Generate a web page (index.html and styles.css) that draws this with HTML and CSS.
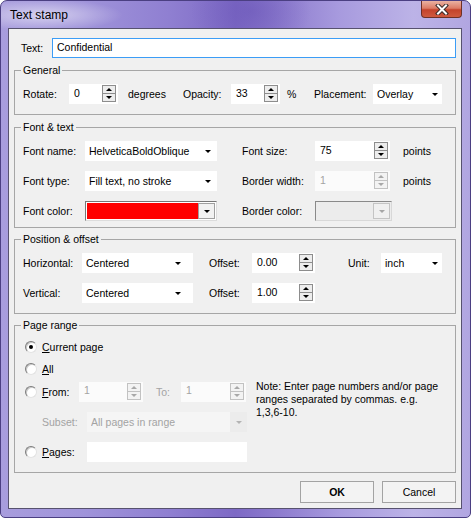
FILE: index.html
```html
<!DOCTYPE html>
<html>
<head>
<meta charset="utf-8">
<title>Text stamp</title>
<link rel="stylesheet" href="styles.css">
</head>
<body>
<div class="window">
  <div class="titlebar">
    <span class="title">Text stamp</span>
    <span class="close">
      <svg width="14" height="11" viewBox="0 0 14 11"><path d="M3 1.5 L11 9.5 M11 1.5 L3 9.5" stroke="#3a2a28" stroke-width="4" stroke-linecap="square"/><path d="M3 1.5 L11 9.5 M11 1.5 L3 9.5" stroke="#ffffff" stroke-width="2" stroke-linecap="square"/></svg>
    </span>
  </div>
  <div class="client">
    <div class="text-row">
      <span class="lbl lbl-text">Text:</span>
      <div class="textbox">Confidential</div>
    </div>

    <fieldset class="group g-general">
      <legend>General</legend>
      <div class="row">
        <span class="lbl w46">Rotate:</span>
        <div class="spin w49"><span class="val">0</span><span class="spinbtn"><span class="up"></span><span class="down"></span></span></div>
        <span class="lbl w55 ml10">degrees</span>
        <span class="lbl w48">Opacity:</span>
        <div class="spin w49"><span class="val">33</span><span class="spinbtn"><span class="up"></span><span class="down"></span></span></div>
        <span class="lbl w27 ml7">%</span>
        <span class="lbl w59">Placement:</span>
        <div class="dropdown w69 pr4"><span class="val">Overlay</span><span class="arrow"></span></div>
      </div>
    </fieldset>

    <fieldset class="group g-font">
      <legend>Font &amp; text</legend>
      <div class="rows gap10">
        <div class="row">
          <span class="lbl w62">Font name:</span>
          <div class="dropdown w132"><span class="val">HelveticaBoldOblique</span><span class="arrow"></span></div>
          <span class="lbl w73 ml25">Font size:</span>
          <div class="spin w75"><span class="val">75</span><span class="spinbtn"><span class="up"></span><span class="down"></span></span></div>
          <span class="lbl ml13">points</span>
        </div>
        <div class="row">
          <span class="lbl w62">Font type:</span>
          <div class="dropdown w132"><span class="val">Fill text, no stroke</span><span class="arrow"></span></div>
          <span class="lbl w73 ml25">Border width:</span>
          <div class="spin w75 disabled"><span class="val">1</span><span class="spinbtn"><span class="up"></span><span class="down"></span></span></div>
          <span class="lbl ml13">points</span>
        </div>
        <div class="row">
          <span class="lbl w62">Font color:</span>
          <div class="colorpick w132"><span class="swatch"></span><span class="cbtn"><span class="arrow"></span></span></div>
          <span class="lbl w73 ml25">Border color:</span>
          <div class="colorpick w77 disabled"><span class="swatch"></span><span class="cbtn"><span class="arrow"></span></span></div>
        </div>
      </div>
    </fieldset>

    <fieldset class="group g-pos">
      <legend>Position &amp; offset</legend>
      <div class="rows gap10">
        <div class="row">
          <span class="lbl w59">Horizontal:</span>
          <div class="dropdown w111 pr12"><span class="val">Centered</span><span class="arrow"></span></div>
          <span class="lbl w43 ml16">Offset:</span>
          <div class="spin w63"><span class="val">0.00</span><span class="spinbtn"><span class="up"></span><span class="down"></span></span></div>
          <span class="lbl w33 ml33">Unit:</span>
          <div class="dropdown w61 pr4"><span class="val">inch</span><span class="arrow"></span></div>
        </div>
        <div class="row">
          <span class="lbl w59">Vertical:</span>
          <div class="dropdown w111 pr12"><span class="val">Centered</span><span class="arrow"></span></div>
          <span class="lbl w43 ml16">Offset:</span>
          <div class="spin w63"><span class="val">1.00</span><span class="spinbtn"><span class="up"></span><span class="down"></span></span></div>
        </div>
      </div>
    </fieldset>

    <fieldset class="group g-page">
      <legend>Page range</legend>
      <div class="prow h18">
        <span class="radio checked"></span>
        <span class="lbl"><u>C</u>urrent page</span>
      </div>
      <div class="prow h18 mt4">
        <span class="radio"></span>
        <span class="lbl"><u>A</u>ll</span>
      </div>
      <div class="pr-mid">
        <div class="pr-left">
          <div class="prow h21">
            <span class="radio"></span>
            <span class="lbl w37"><u>F</u>rom:</span>
            <div class="spin w64 disabled"><span class="val">1</span><span class="spinbtn"><span class="up"></span><span class="down"></span></span></div>
            <span class="lbl w25 ml13 dis">To:</span>
            <div class="spin w65 disabled"><span class="val">1</span><span class="spinbtn"><span class="up"></span><span class="down"></span></span></div>
          </div>
          <div class="prow h20">
            <span class="lbl w45 ml19 dis">Subset:</span>
            <div class="dropdown w160 disabled-dd"><span class="val">All pages in range</span><span class="ddbtn"><span class="arrow"></span></span></div>
          </div>
        </div>
        <div class="note">Note: Enter page numbers and/or page<br>ranges separated by commas. e.g.<br>1,3,6-10.</div>
      </div>
      <div class="prow h20 mt10">
        <span class="radio"></span>
        <span class="lbl w45"><u>P</u>ages:</span>
        <div class="input w160"></div>
      </div>
    </fieldset>

    <div class="buttons">
      <button class="btn btn-ok">OK</button>
      <button class="btn">Cancel</button>
    </div>
  </div>
</div>
</body>
</html>
```

FILE: styles.css
```css
* { box-sizing: border-box; }

body {
  margin: 0;
  background: #ffffff;
  font-family: "Liberation Sans", Arial, sans-serif;
  font-size: 10.5px;
  color: #000;
}

.window {
  width: 471px;
  height: 518px;
  border: 1px solid #4b3f82;
  border-radius: 7px 7px 5px 5px;
  padding: 0 8px 8px 7px;
  display: flex;
  flex-direction: column;
  background:
    radial-gradient(ellipse 80px 16px at 42px 14px, rgba(255,255,255,0.55), rgba(255,255,255,0) 100%),
    radial-gradient(ellipse 60px 40px at 250px 10px, rgba(100,80,180,0.45), rgba(100,80,180,0) 100%),
    linear-gradient(90deg, #a89ddd 0%, #9f93da 18%, #8f7fd1 36%, #7d69c5 50%, #8b79cd 58%, #a79ade 72%, #bcb3e7 88%, #b1a6e1 100%);
}

.titlebar {
  height: 27px;
  display: flex;
  justify-content: space-between;
  align-items: flex-start;
}

.title {
  font-size: 12px;
  padding: 7px 0 0 2px;
  color: #000;
}

.close {
  width: 41px;
  height: 17px;
  border: 1px solid #6e3026;
  border-top: none;
  border-radius: 0 0 4px 4px;
  background: linear-gradient(#eab2a2 0%, #dc7c66 45%, #c4432c 55%, #cf5a3f 100%);
  display: flex;
  align-items: center;
  justify-content: center;
}

.client {
  flex: 1;
  border: 1px solid #57526f;
  background: #f0f0f0;
  padding: 9px 5px 0 5px;
  display: flex;
  flex-direction: column;
}

.text-row {
  display: flex;
  align-items: center;
  height: 20px;
  padding-left: 7px;
}

.lbl { white-space: nowrap; flex: none; }
.lbl-text { width: 31px; }

.textbox {
  flex: 1;
  height: 20px;
  border: 1px solid #3c9df6;
  background: #fff;
  padding: 0 4px;
  line-height: 17px;
}

fieldset.group {
  margin: 6px 0 0;
  border: 1px solid #a6a6a6;
  padding: 0 8px;
  min-width: 0;
}

fieldset.group legend {
  padding: 0 2px;
  margin-left: -2px;
  line-height: 12px;
}

.g-general { padding-top: 8px !important; padding-bottom: 10px !important; }
.g-font { padding-top: 8px !important; padding-bottom: 6px !important; }
.g-pos { margin-top: 5px !important; padding-top: 8px !important; padding-bottom: 10px !important; }
.g-page { margin-top: 5px !important; padding-top: 7px !important; padding-bottom: 10px !important; }

.rows { display: flex; flex-direction: column; }
.gap10 { gap: 10px; }

.row {
  display: flex;
  align-items: center;
  height: 20px;
}

/* widths */
.w25 { width: 25px; } .w27 { width: 27px; } .w33 { width: 33px; } .w37 { width: 37px; }
.w43 { width: 43px; } .w45 { width: 45px; } .w46 { width: 46px; } .w48 { width: 48px; }
.w49 { width: 49px; } .w55 { width: 55px; } .w59 { width: 59px; } .w61 { width: 61px; }
.w62 { width: 62px; } .w63 { width: 63px; } .w64 { width: 64px; } .w65 { width: 65px; }
.w69 { width: 69px; } .w73 { width: 73px; } .w75 { width: 75px; } .w77 { width: 77px; }
.w111 { width: 111px; } .w132 { width: 132px; } .w160 { width: 160px; }

.ml7 { margin-left: 7px; } .ml10 { margin-left: 10px; } .ml13 { margin-left: 13px; }
.ml16 { margin-left: 16px; } .ml19 { margin-left: 19px; } .ml25 { margin-left: 25px; }
.ml33 { margin-left: 33px; }
.mt4 { margin-top: 4px; } .mt10 { margin-top: 10px; }

/* spin box */
.spin {
  flex: none;
  display: flex;
  align-items: center;
  height: 20px;
  background: #fff;
  padding: 0 2px 0 5px;
}
.spin .val { flex: 1; padding-bottom: 3px; }
.spinbtn {
  width: 14px;
  height: 17px;
  border: 1px solid #8d8d8d;
  background: #ededed;
  display: flex;
  flex-direction: column;
  margin-bottom: 1px;
}
.spinbtn span {
  flex: 1;
  display: flex;
  align-items: center;
  justify-content: center;
}
.spinbtn span + span { border-top: 1px solid #8d8d8d; }
.up::before {
  content: "";
  border-left: 3px solid transparent;
  border-right: 3px solid transparent;
  border-bottom: 3px solid #000;
}
.down::before {
  content: "";
  border-left: 3px solid transparent;
  border-right: 3px solid transparent;
  border-top: 3px solid #000;
}
.spin.disabled { background: #fbfbfb; }
.spin.disabled .val { color: #a3a3a3; }
.spin.disabled .spinbtn { border-color: #c2c2c2; background: #f3f3f3; }
.spin.disabled .spinbtn span + span { border-top-color: #c2c2c2; }
.spin.disabled .up::before { border-bottom-color: #a8a8a8; }
.spin.disabled .down::before { border-top-color: #a8a8a8; }

/* dropdown */
.dropdown {
  flex: none;
  display: flex;
  align-items: center;
  height: 20px;
  background: #fff;
  padding: 0 6px 0 4px;
}
.dropdown.pr4 { padding-right: 4px; }
.dropdown.pr12 { padding-right: 12px; }
.dropdown .val { flex: 1; white-space: nowrap; overflow: hidden; }
.arrow {
  width: 0;
  height: 0;
  border-left: 3px solid transparent;
  border-right: 3px solid transparent;
  border-top: 3px solid #000;
}

.dropdown.disabled-dd {
  background: #f5f5f5;
  padding-right: 0;
}
.disabled-dd .val { color: #a3a3a3; }
.ddbtn {
  width: 17px;
  height: 20px;
  background: #ececec;
  display: flex;
  align-items: center;
  justify-content: center;
}
.ddbtn .arrow { border-top-color: #b3b3b3; }

/* color picker */
.colorpick {
  flex: none;
  display: flex;
  height: 20px;
  border: 1px solid;
  border-color: #777 #dcdcdc #dcdcdc #777;
  background: #fff;
  padding: 1px;
}
.colorpick .swatch { flex: 1; background: #ff0000; }
.colorpick .cbtn {
  width: 17px;
  border: 1px solid #a0a0a0;
  background: #f2f2f2;
  display: flex;
  align-items: center;
  justify-content: center;
}
.colorpick.disabled { border-color: #8a8a8a #d8d8d8 #d8d8d8 #8a8a8a; background: #ececec; }
.colorpick.disabled .swatch { background: #ececec; }
.colorpick.disabled .cbtn { border-color: #c4c4c4; background: #f0f0f0; }
.colorpick.disabled .arrow { border-top-color: #a6a6a6; }

/* page range */
.prow { display: flex; align-items: center; }
.h18 { height: 18px; } .h20 { height: 20px; } .h21 { height: 21px; }

.radio {
  flex: none;
  width: 12px;
  height: 12px;
  margin: 0 5px 0 2px;
  border-radius: 50%;
  border: 1px solid;
  border-color: #7c7c7c #e2e2e2 #e2e2e2 #7c7c7c;
  background: #fff;
  box-shadow: inset 1px 1px 0 #c8c8c8;
  display: flex;
  align-items: center;
  justify-content: center;
}
.radio.checked::after {
  content: "";
  width: 4px;
  height: 4px;
  border-radius: 50%;
  background: #000;
}

.dis { color: #a3a3a3; }

.pr-mid {
  display: flex;
  margin-top: 3px;
}
.pr-left {
  width: 224px;
  display: flex;
  flex-direction: column;
  gap: 10px;
  flex: none;
}
.note {
  margin-left: 9px;
  line-height: 13px;
  white-space: nowrap;
  margin-top: -1px;
}

.input {
  flex: none;
  height: 20px;
  background: #fff;
}

/* buttons */
.buttons {
  display: flex;
  justify-content: flex-end;
  gap: 8px;
  margin-top: 8px;
}
.btn {
  width: 74px;
  height: 22px;
  border: 1px solid #a3a3a3;
  background: #f3f3f3;
  font-family: "Liberation Sans", Arial, sans-serif;
  font-size: 10.5px;
  color: #000;
  padding: 0;
}
.btn-ok { font-weight: bold; }
```
